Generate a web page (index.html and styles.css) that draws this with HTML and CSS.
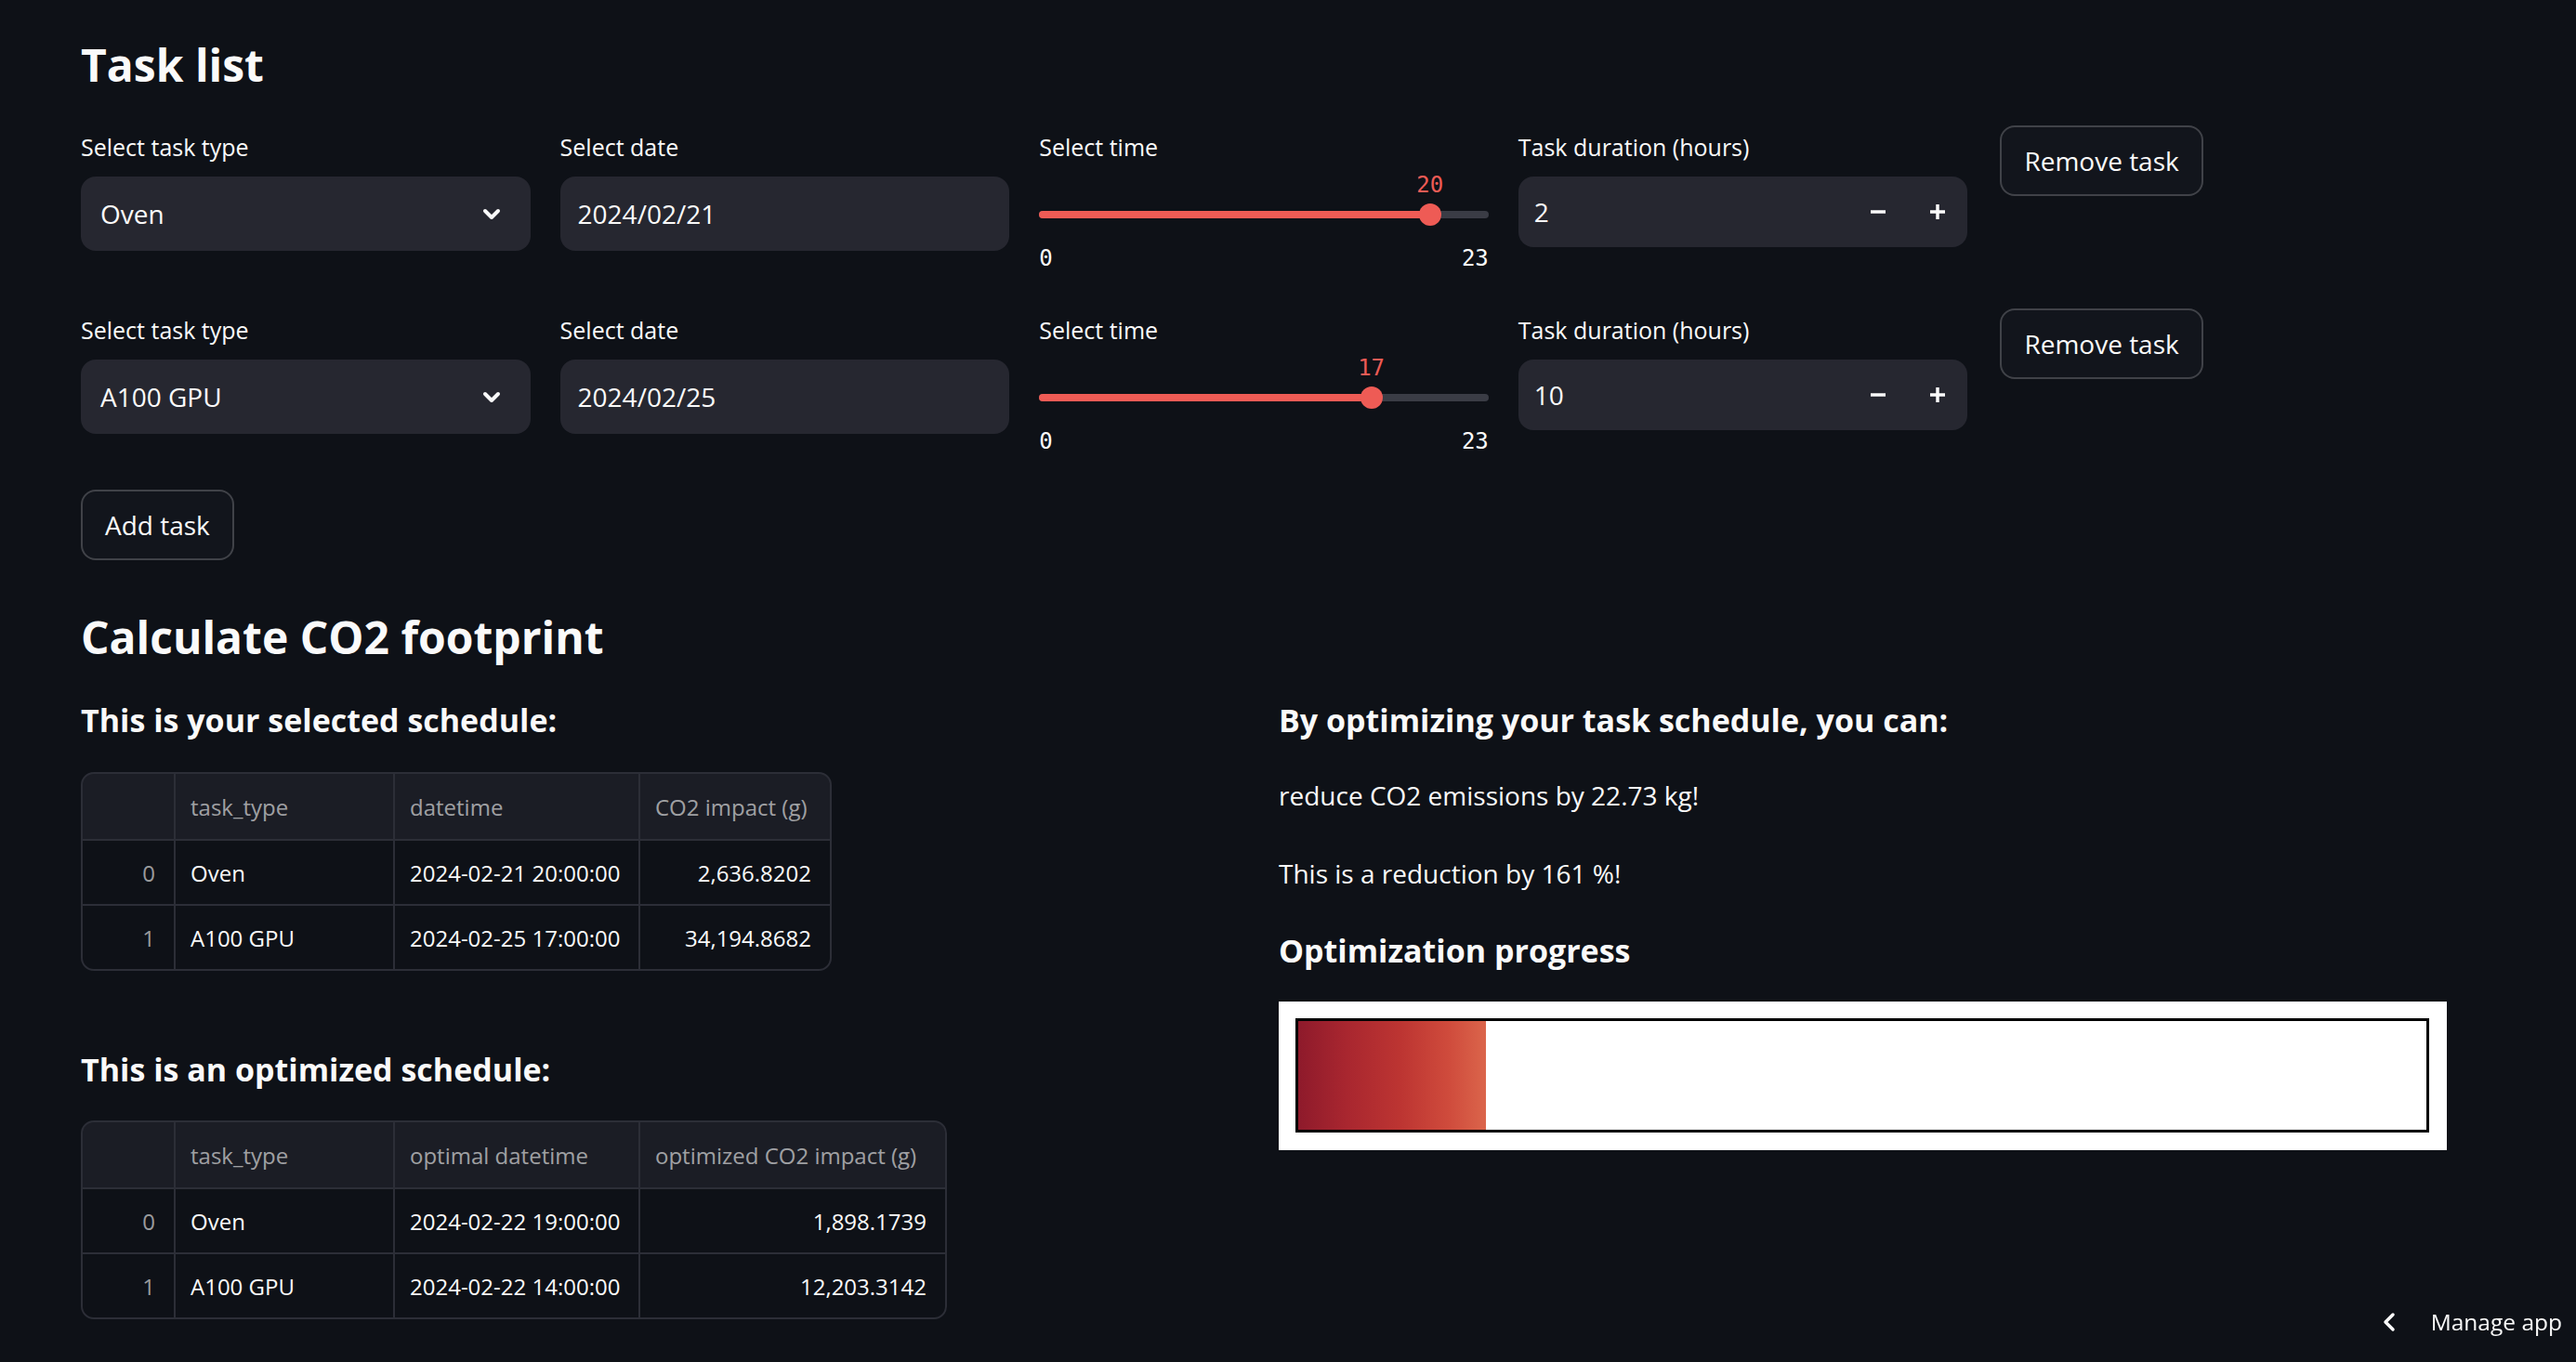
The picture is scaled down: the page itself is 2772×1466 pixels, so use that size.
FILE: index.html
```html
<!DOCTYPE html>
<html lang="en">
<head>
<meta charset="utf-8">
<title>Task list</title>
<link rel="stylesheet" href="styles.css">
</head>
<body>
<main class="main">
  <h3 class="h3">Task list</h3>

  <div class="task-rows">
    <div class="task-row">
      <div class="field">
        <div class="label">Select task type</div>
        <div class="select"><span>Oven</span>
          <svg class="chev" width="20" height="13" viewBox="0 0 20 13"><path d="M3 3 L10 10 L17 3" fill="none" stroke="#fafafa" stroke-width="4" stroke-linecap="round" stroke-linejoin="round"/></svg>
        </div>
      </div>
      <div class="field">
        <div class="label">Select date</div>
        <div class="input date">2024/02/21</div>
      </div>
      <div class="field">
        <div class="label">Select time</div>
        <div class="slider">
          <div class="track">
            <div class="fill" style="width:86.96%"></div>
            <div class="thumb" style="left:86.96%"></div>
            <div class="thumb-value" style="left:86.96%">20</div>
          </div>
          <div class="ticks"><span>0</span><span>23</span></div>
        </div>
      </div>
      <div class="field">
        <div class="label">Task duration (hours)</div>
        <div class="number">
          <span class="value">2</span>
          <div class="stepper">
            <svg width="16" height="16" viewBox="0 0 16 16"><path d="M0 8 H16" stroke="#fafafa" stroke-width="3.5"/></svg>
            <svg width="16" height="16" viewBox="0 0 16 16"><path d="M0 8 H16 M8 0 V16" stroke="#fafafa" stroke-width="3.5"/></svg>
          </div>
        </div>
      </div>
      <div class="btn-cell"><button class="btn">Remove task</button></div>
    </div>

    <div class="task-row">
      <div class="field">
        <div class="label">Select task type</div>
        <div class="select"><span>A100 GPU</span>
          <svg class="chev" width="20" height="13" viewBox="0 0 20 13"><path d="M3 3 L10 10 L17 3" fill="none" stroke="#fafafa" stroke-width="4" stroke-linecap="round" stroke-linejoin="round"/></svg>
        </div>
      </div>
      <div class="field">
        <div class="label">Select date</div>
        <div class="input date">2024/02/25</div>
      </div>
      <div class="field">
        <div class="label">Select time</div>
        <div class="slider">
          <div class="track">
            <div class="fill" style="width:73.91%"></div>
            <div class="thumb" style="left:73.91%"></div>
            <div class="thumb-value" style="left:73.91%">17</div>
          </div>
          <div class="ticks"><span>0</span><span>23</span></div>
        </div>
      </div>
      <div class="field">
        <div class="label">Task duration (hours)</div>
        <div class="number">
          <span class="value">10</span>
          <div class="stepper">
            <svg width="16" height="16" viewBox="0 0 16 16"><path d="M0 8 H16" stroke="#fafafa" stroke-width="3.5"/></svg>
            <svg width="16" height="16" viewBox="0 0 16 16"><path d="M0 8 H16 M8 0 V16" stroke="#fafafa" stroke-width="3.5"/></svg>
          </div>
        </div>
      </div>
      <div class="btn-cell"><button class="btn">Remove task</button></div>
    </div>
  </div>

  <button class="btn add-btn">Add task</button>

  <h3 class="h3 calc-title">Calculate CO2 footprint</h3>

  <div class="cols2">
    <div class="col">
      <h4 class="h4">This is your selected schedule:</h4>
      <div class="df df1">
        <div class="cell hd"></div>
        <div class="cell hd">task_type</div>
        <div class="cell hd">datetime</div>
        <div class="cell hd">CO2 impact (g)</div>
        <div class="cell idx">0</div>
        <div class="cell">Oven</div>
        <div class="cell">2024-02-21 20:00:00</div>
        <div class="cell num">2,636.8202</div>
        <div class="cell idx">1</div>
        <div class="cell">A100 GPU</div>
        <div class="cell">2024-02-25 17:00:00</div>
        <div class="cell num">34,194.8682</div>
      </div>

      <h4 class="h4 sub2">This is an optimized schedule:</h4>
      <div class="df df2">
        <div class="cell hd"></div>
        <div class="cell hd">task_type</div>
        <div class="cell hd">optimal datetime</div>
        <div class="cell hd">optimized CO2 impact (g)</div>
        <div class="cell idx">0</div>
        <div class="cell">Oven</div>
        <div class="cell">2024-02-22 19:00:00</div>
        <div class="cell num">1,898.1739</div>
        <div class="cell idx">1</div>
        <div class="cell">A100 GPU</div>
        <div class="cell">2024-02-22 14:00:00</div>
        <div class="cell num">12,203.3142</div>
      </div>
    </div>

    <div class="col">
      <h4 class="h4">By optimizing your task schedule, you can:</h4>
      <p class="p first">reduce CO2 emissions by 22.73 kg!</p>
      <p class="p">This is a reduction by 161 %!</p>
      <h4 class="h4 progress-title">Optimization progress</h4>
      <div class="figure">
        <div class="bar"><div class="bar-fill" style="width:16.6%"></div></div>
      </div>
    </div>
  </div>
</main>

<div class="manage">
  <svg width="14" height="22" viewBox="0 0 14 22"><path d="M11 3 L3 11 L11 19" fill="none" stroke="#fafafa" stroke-width="3.5" stroke-linecap="round" stroke-linejoin="round"/></svg>
  <span>Manage app</span>
</div>
</body>
</html>
```
FILE: styles.css
```css
* { box-sizing: border-box; }

html, body {
  margin: 0;
  padding: 0;
  background: #0e1117;
  overflow: hidden;
}

body {
  font-family: "Open Sans", "Noto Sans", sans-serif;
  color: #fafafa;
  width: 2772px;
  height: 1466px;
}

.main {
  width: 2633px;
  padding: 41px 0 0 87px;
}

.h3 {
  font-size: 48px;
  font-weight: 700;
  line-height: 58px;
  height: 58px;
  margin: 0;
}

.task-rows {
  display: flex;
  flex-direction: column;
  gap: 40px;
  margin-top: 36px;
}

.task-row {
  display: grid;
  grid-template-columns: repeat(5, 1fr);
  column-gap: 32px;
  align-items: start;
}

.field { padding-top: 5px; }

.label {
  font-size: 25px;
  line-height: 36px;
  height: 36px;
  margin-bottom: 14px;
  white-space: nowrap;
}

.select, .input {
  height: 80px;
  background: #262730;
  border-radius: 16px;
  display: flex;
  align-items: center;
  font-size: 28px;
}

.select {
  justify-content: space-between;
  padding: 0 32px 0 21px;
}

.input.date { padding: 0 19px; }

.number {
  height: 76px;
  margin-top: 2px;
  background: #262730;
  border-radius: 16px;
  display: flex;
  align-items: center;
  font-size: 28px;
  padding: 0 24px 0 17px;
}

.number .value { flex: 1; }

.stepper {
  display: flex;
  gap: 48px;
  align-items: center;
}

.stepper svg { display: block; }

.slider {
  padding-top: 37px;
}

.track {
  position: relative;
  height: 8px;
  border-radius: 4px;
  background: #3a3c45;
}

.fill {
  position: absolute;
  left: 0;
  top: 0;
  bottom: 0;
  border-radius: 4px;
  background: #ee5b55;
}

.thumb {
  position: absolute;
  top: 50%;
  width: 24px;
  height: 24px;
  margin: -12px 0 0 -12px;
  border-radius: 50%;
  background: #ee5b55;
}

.thumb-value {
  position: absolute;
  top: -42px;
  transform: translateX(-50%);
  font-family: "DejaVu Sans Mono", "Liberation Mono", monospace;
  font-size: 24px;
  line-height: 28px;
  color: #ee5b55;
}

.ticks {
  display: flex;
  justify-content: space-between;
  margin-top: 29px;
  font-family: "DejaVu Sans Mono", "Liberation Mono", monospace;
  font-size: 24px;
  line-height: 28px;
}

.btn-cell { padding-left: 3px; }

.btn {
  height: 76px;
  padding: 0 24px;
  border: 2px solid rgba(250, 250, 250, 0.2);
  border-radius: 16px;
  background: #12151c;
  color: #fafafa;
  font-family: "Open Sans", "Noto Sans", sans-serif;
  font-size: 28px;
  display: inline-flex;
  align-items: center;
  white-space: nowrap;
}

.add-btn { margin-top: 38px; }

.calc-title { margin-top: 54px; }

.cols2 {
  display: grid;
  grid-template-columns: 1fr 1fr;
  column-gap: 32px;
  margin-top: 38px;
  align-items: start;
}

.h4 {
  font-size: 34px;
  font-weight: 700;
  line-height: 44px;
  height: 44px;
  margin: 0;
  white-space: nowrap;
}

.df {
  display: inline-grid;
  gap: 2px;
  background: #2c2e37;
  border: 2px solid #2c2e37;
  border-radius: 14px;
  overflow: hidden;
  font-size: 24px;
  margin-top: 34px;
  grid-template-rows: 70px 68px 68px;
}

.df1 { grid-template-columns: 98px 234px 262px 204px; }
.df2 { grid-template-columns: 98px 234px 262px 328px; margin-top: 33px; }

.cell {
  background: #0e1117;
  display: flex;
  align-items: center;
  padding: 0 16px;
  white-space: nowrap;
}

.cell.hd {
  background: #1b1d25;
  color: rgba(250, 250, 250, 0.6);
}

.cell.idx {
  justify-content: flex-end;
  color: rgba(250, 250, 250, 0.6);
  padding-right: 20px;
}

.cell.num {
  justify-content: flex-end;
  padding-right: 20px;
}

.sub2 { margin-top: 84px; }

.col { display: flex; flex-direction: column; align-items: flex-start; }

.p {
  font-size: 28px;
  line-height: 44px;
  height: 44px;
  margin: 40px 0 0;
}

.p.first { margin-top: 37px; }

.progress-title { margin-top: 39px; }

.figure {
  align-self: stretch;
  margin-top: 33px;
  background: #ffffff;
  padding: 18px 19px 19px 18px;
}

.bar {
  height: 123px;
  border: 3px solid #000;
  background: #fff;
}

.bar-fill {
  height: 100%;
  background: linear-gradient(to right, #8e1a2b 0%, #a8262f 25%, #bd3532 55%, #cf4b3c 80%, #db654b 100%);
}

.manage {
  position: fixed;
  right: 15px;
  bottom: 28px;
  display: flex;
  align-items: center;
  gap: 38px;
  font-size: 24.5px;
  line-height: 30px;
  color: #fafafa;
}

.manage svg { display: block; }
```
